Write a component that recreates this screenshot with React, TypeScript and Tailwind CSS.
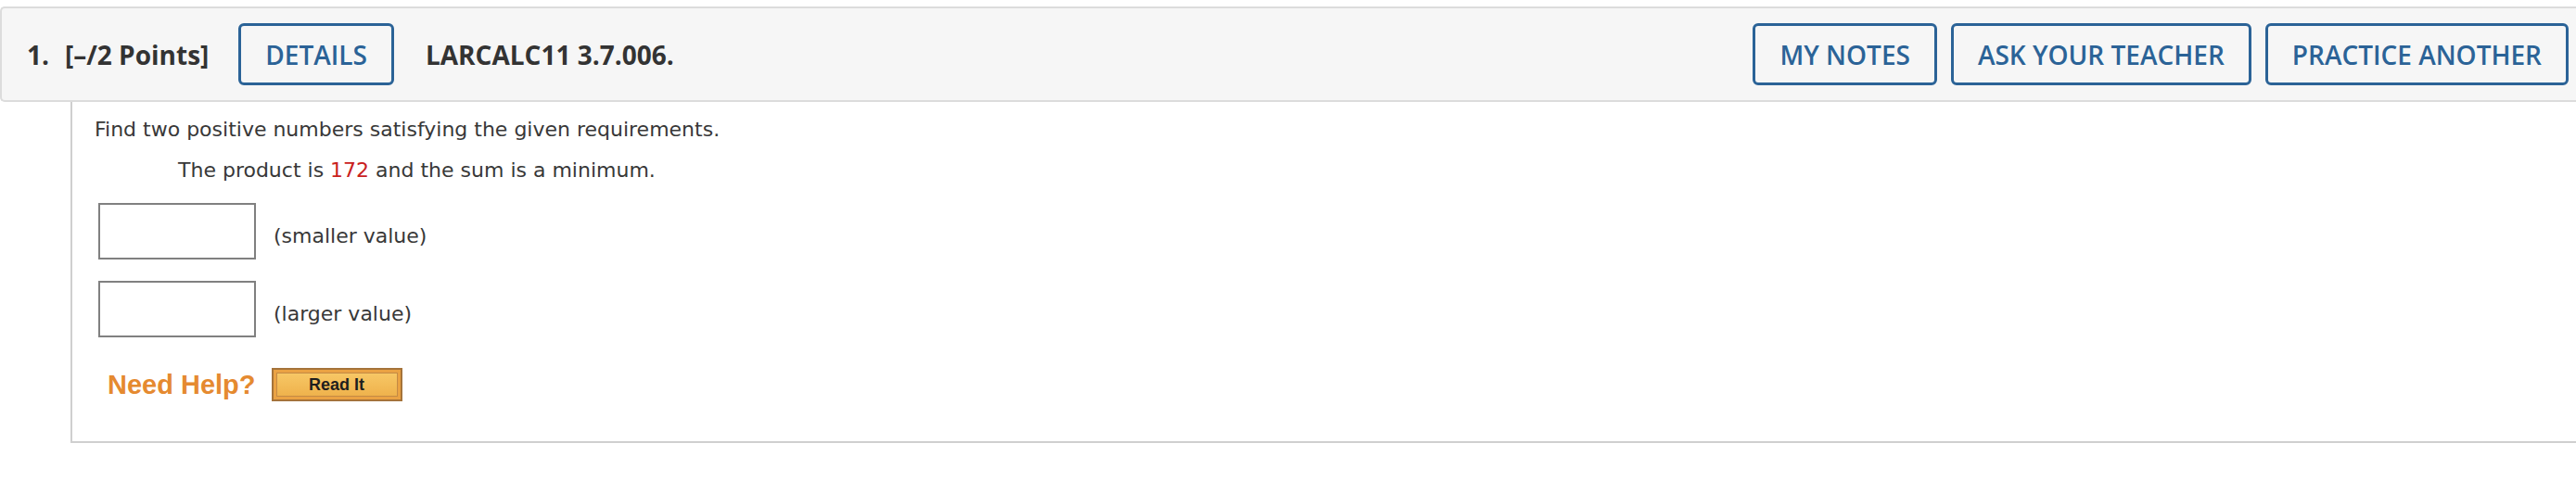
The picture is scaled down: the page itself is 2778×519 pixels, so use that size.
import React from 'react';

const HeaderButton = ({ label }: { label: string }) => (
  <button className="h-[67px] px-[26px] flex items-center border-[3px] border-[#2b6397] rounded-[6px] text-[#2b6397] text-[28px] font-semibold font-['Open_Sans',sans-serif] leading-none">
    {label}
  </button>
);

const AnswerRow = ({ label }: { label: string }) => (
  <div className="flex items-end ml-[4px]">
    <input
      type="text"
      className="w-[170px] h-[61px] border-2 border-[#808080] bg-white outline-none"
    />
    <span className="ml-[19px] mb-[9px] leading-[33px]">{label}</span>
  </div>
);

const App = () => {
  return (
    <div className="w-full h-[519px] bg-white pt-[7px] overflow-hidden">
      {/* question header */}
      <div className="h-[103px] flex items-center justify-between border-2 border-r-0 border-[#dcdcdc] rounded-l-[5px] bg-[#f6f6f6] pl-[27px] pr-[8px] font-['Open_Sans',sans-serif] text-[#333]">
        <div className="flex items-center">
          <span className="text-[28px] font-bold">1.</span>
          <span className="ml-[17px] text-[28px] font-bold">[–/2 Points]</span>
          <div className="ml-[32px]">
            <HeaderButton label="DETAILS" />
          </div>
          <span className="ml-[34px] text-[28px] font-bold">LARCALC11 3.7.006.</span>
        </div>
        <div className="flex items-center gap-[15px]">
          <HeaderButton label="MY NOTES" />
          <HeaderButton label="ASK YOUR TEACHER" />
          <HeaderButton label="PRACTICE ANOTHER" />
        </div>
      </div>

      {/* question body */}
      <div className="ml-[76px] border-l-2 border-b-2 border-[#cfcfcf] pl-[24px] pt-[13px] pb-[43px] font-['DejaVu_Sans',Verdana,sans-serif] text-[22px] text-[#383838]">
        <p className="leading-[33px]">Find two positive numbers satisfying the given requirements.</p>
        <p className="mt-[11px] ml-[90px] leading-[33px]">
          The product is <span className="text-[#c9211e]">172</span> and the sum is a minimum.
        </p>
        <div className="mt-[19px]">
          <AnswerRow label="(smaller value)" />
        </div>
        <div className="mt-[23px]">
          <AnswerRow label="(larger value)" />
        </div>
        <div className="mt-[33px] ml-[14px] flex items-center">
          <span className="font-['Liberation_Sans',Arial,sans-serif] font-bold text-[29px] text-[#e58a30] leading-none">
            Need Help?
          </span>
          <button className="ml-[17px] w-[141px] h-[36px] border-2 border-[#a5733a] bg-[#eaa243] p-[3px]">
            <span className="h-full w-full flex items-center justify-center border border-[#c48a45] bg-gradient-to-b from-[#f7c765] to-[#efb24c] font-['Liberation_Sans',Arial,sans-serif] font-bold text-[18px] text-[#1e1e1e] leading-none">
              Read It
            </span>
          </button>
        </div>
      </div>
    </div>
  );
};

export default App;
